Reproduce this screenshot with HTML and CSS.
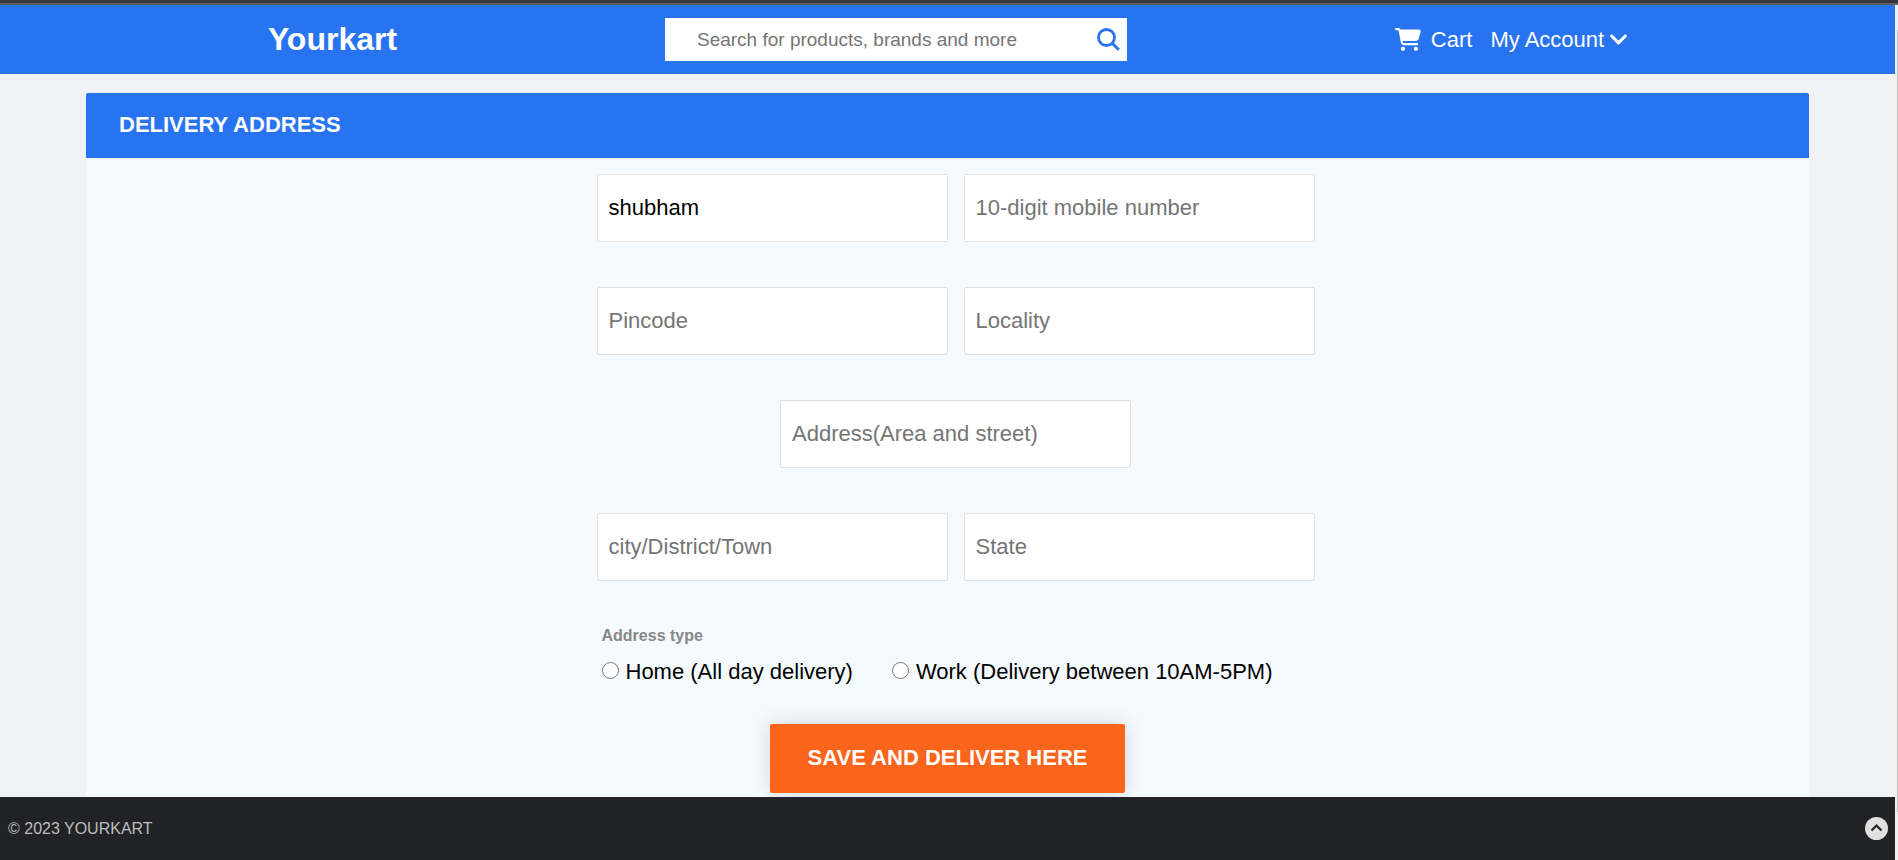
FILE: index.html
```html
<!DOCTYPE html>
<html lang="en">
<head>
<meta charset="utf-8">
<meta name="viewport" content="width=device-width, initial-scale=1">
<title>Yourkart - Delivery address</title>
<link rel="stylesheet" href="styles.css">
</head>
<body>
<div class="topline"></div>
<div class="frame">
  <div class="page">
    <header class="header">
      <a class="brand" href="#">Yourkart</a>
      <form class="search" role="search">
        <input class="search-input" type="search" aria-label="Search" placeholder="Search for products, brands and more">
        <button class="search-button" type="button" aria-label="Search">
          <svg class="icon-search" viewBox="0 0 23 23" aria-hidden="true"><circle cx="9.5" cy="9.5" r="8" fill="none" stroke="currentColor" stroke-width="2.8"/><path d="M15.2 15.2 21.8 21.8" stroke="currentColor" stroke-width="3"/></svg>
        </button>
      </form>
      <nav class="nav">
        <a class="nav-link nav-cart" href="#">
          <svg class="icon-cart" viewBox="0 0 576 512" aria-hidden="true"><path fill="currentColor" d="M0 24C0 10.700 10.700 0 24 0H69.500c22 0 41.500 12.800 50.600 32h411c26.300 0 45.500 25 38.600 50.400l-41 152.300c-8.500 31.400-37 53.300-69.500 53.300H170.700l5.400 28.500c2.200 11.300 12.100 19.500 23.600 19.500H488c13.300 0 24 10.700 24 24s-10.700 24-24 24H199.700c-34.600 0-64.300-24.600-70.700-58.500L77.400 54.500c-.7-3.800-4-6.500-7.900-6.500H24C10.700 48 0 37.300 0 24zM128 464a48 48 0 1 1 96 0 48 48 0 1 1-96 0zm336-48a48 48 0 1 1 0 96 48 48 0 1 1 0-96z"/></svg>
          Cart
        </a>
        <button class="nav-link nav-account" type="button">
          My Account
          <svg class="icon-chevron" viewBox="0 0 17 12" aria-hidden="true"><path d="M1.700 2 8.500 8.900 15.300 2" fill="none" stroke="currentColor" stroke-width="3.100" stroke-linecap="round" stroke-linejoin="round"/></svg>
        </button>
      </nav>
    </header>
    <main class="card">
      <h1 class="card-title">DELIVERY ADDRESS</h1>
      <form class="form">
        <div class="fields">
          <div class="row">
            <input class="field" type="text" aria-label="Name" value="shubham">
            <input class="field" type="tel" aria-label="Mobile number" placeholder="10-digit mobile number">
          </div>
          <div class="row">
            <input class="field" type="text" aria-label="Pincode" placeholder="Pincode">
            <input class="field" type="text" aria-label="Locality" placeholder="Locality">
          </div>
          <div class="row">
            <input class="field" type="text" aria-label="Address" placeholder="Address(Area and street)">
          </div>
          <div class="row">
            <input class="field" type="text" aria-label="City" placeholder="city/District/Town">
            <input class="field" type="text" aria-label="State" placeholder="State">
          </div>
          <div class="types" role="radiogroup" aria-labelledby="type-title">
            <p class="types-title" id="type-title">Address type</p>
            <div class="options">
              <label class="option"><input class="radio" type="radio" name="type">Home (All day delivery)</label>
              <label class="option"><input class="radio" type="radio" name="type">Work (Delivery between 10AM-5PM)</label>
            </div>
          </div>
        </div>
        <button class="save" type="button">SAVE AND DELIVER HERE</button>
      </form>
    </main>
    <footer class="footer">
      <span>© 2023 YOURKART</span>
      <a class="to-top" href="#" aria-label="Back to top">
        <svg class="icon-top" viewBox="0 0 23 23" aria-hidden="true"><circle cx="11.500" cy="11.500" r="11.500" fill="#e0e0e0"/><path d="M6.500 13.500 11.500 8.500 16.500 13.500" fill="none" stroke="#212226" stroke-width="2.200"/></svg>
      </a>
    </footer>
  </div>
  <div class="scroll"><div class="thumb"></div></div>
</div>
</body>
</html>
```
FILE: styles.css
```css
* {
  box-sizing: border-box;
}

body {
  margin: 0;
  min-height: 100vh;
  display: flex;
  flex-direction: column;
  background: #f1f2f6;
  color: #000;
  font-family: "Liberation Sans", Arial, sans-serif;
  font-size: 22px;
}

input,
button {
  font: inherit;
}

.topline {
  height: 5px;
  background: #36373b;
  border-bottom: 2px solid #5f6063;
}

.frame {
  flex: 1;
  display: flex;
}

.page {
  flex: 1;
  display: flex;
  flex-direction: column;
}

.header {
  display: flex;
  align-items: center;
  justify-content: space-evenly;
  padding: 13px 0;
  background: #2874f0;
  color: #fff;
}

.brand {
  padding-bottom: 2px;
  color: inherit;
  font-size: 32px;
  font-weight: bold;
  line-height: 40px;
  text-decoration: none;
}

.search {
  display: flex;
  width: 462px;
  height: 43px;
  background: #fff;
}

.search-input {
  flex: 1;
  min-width: 0;
  padding: 0 0 0 32px;
  border: 0;
  background: none;
  font-size: 19px;
  outline: 0;
}

.search-button {
  display: flex;
  align-items: center;
  padding: 0 7px;
  border: 0;
  background: none;
  color: #2874f0;
}

.icon-search {
  width: 23px;
  height: 23px;
}

.nav {
  display: flex;
  gap: 18px;
}

.nav-link {
  display: flex;
  align-items: center;
  padding: 0;
  border: 0;
  background: none;
  color: #fff;
  line-height: 26px;
  text-decoration: none;
}

.nav-cart {
  gap: 10px;
}

.nav-account {
  gap: 6px;
}

.icon-cart {
  width: 26px;
  height: 23px;
}

.icon-chevron {
  width: 17px;
  height: 12px;
}

.card {
  flex: 1;
  margin: 19px 86px 0;
  background: #f5faff;
  border-radius: 2px 2px 0 0;
  overflow: hidden;
}

.card-title {
  margin: 0;
  padding: 19px 33px 20px;
  background: #2874f0;
  color: #fff;
  font-size: 22px;
  line-height: 26px;
}

.form {
  display: flex;
  flex-direction: column;
  align-items: center;
  gap: 39px;
  padding: 16px 0 3px;
}

.fields {
  display: flex;
  flex-direction: column;
  gap: 45px;
  padding-left: 16px;
}

.row {
  display: flex;
  justify-content: center;
  gap: 16px;
}

.field {
  width: 351px;
  height: 68px;
  padding: 0 11px;
  border: 1px solid #e0e0e0;
  border-radius: 2px;
  background: #fff;
}

.field::placeholder,
.search-input::placeholder {
  color: #757575;
}

.types {
  padding-left: 5px;
}

.types-title {
  margin: 0 0 13px;
  color: #878787;
  font-size: 16px;
  font-weight: bold;
  line-height: 20px;
}

.options {
  display: flex;
  gap: 39px;
}

.option {
  display: flex;
  align-items: center;
  gap: 7px;
  line-height: 26px;
}

.radio {
  width: 17px;
  height: 17px;
  margin: 0 0 4px;
}

.save {
  padding: 21px 38px 22px;
  border: 0;
  border-radius: 2px;
  background: #fb641b;
  box-shadow: 0 0 20px rgba(0, 0, 0, 0.15);
  color: #fff;
  font-weight: bold;
  line-height: 26px;
}

.footer {
  display: flex;
  align-items: center;
  justify-content: space-between;
  padding: 20px 7px 20px 8px;
  background: #212226;
  color: #bdbdbd;
  font-size: 16px;
  line-height: 23px;
}

.to-top {
  display: flex;
}

.icon-top {
  width: 23px;
  height: 23px;
}

.scroll {
  width: 3px;
  padding: 25px 0 48px 2px;
  background: #f1f1f1;
  display: flex;
}

.thumb {
  flex: 1;
  background: #c1c1c1;
}
```
